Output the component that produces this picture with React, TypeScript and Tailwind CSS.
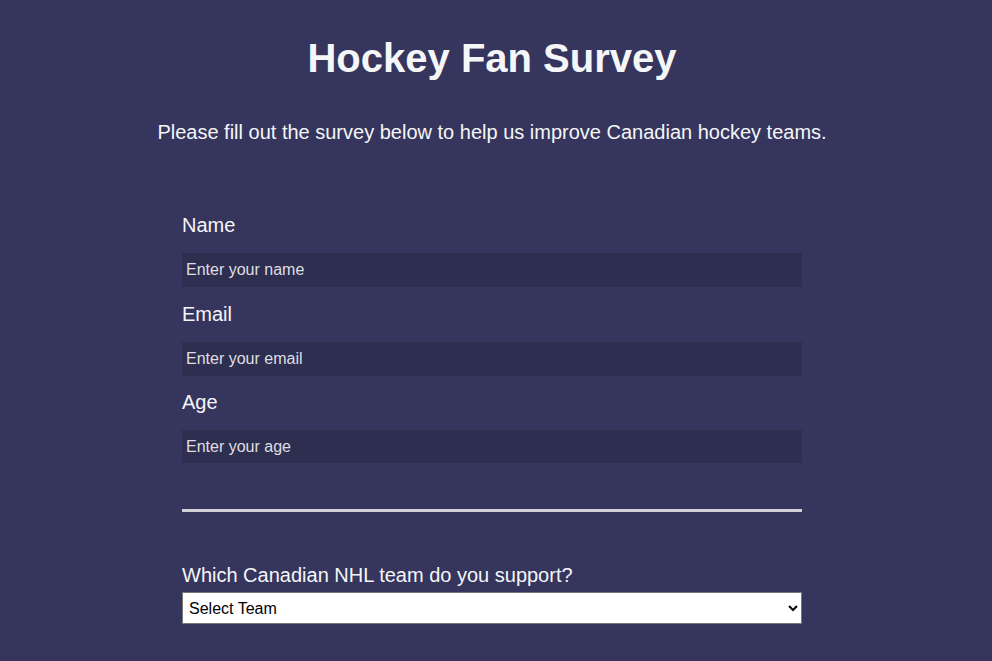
export default function App() {
  return (
    <div
      className="min-h-screen bg-[#35355d] pr-[8px] text-[#f5f6f7]"
      style={{ fontFamily: '"Liberation Sans", Arial, sans-serif' }}
    >
      <h1 className="pt-[35px] text-center text-[40px] font-bold leading-[46px]">Hockey Fan Survey</h1>
      <p className="mt-[40px] text-center text-[20px] leading-[23px]">
        Please fill out the survey below to help us improve Canadian hockey teams.
      </p>
      <form className="mx-auto mt-[70px] w-[620px]">
        <label className="block text-[20px] leading-[23px]">Name</label>
        <input
          type="text"
          placeholder="Enter your name"
          className="mt-[16px] block h-[34px] w-full bg-[#2e2e50] px-[4px] text-[16px] placeholder:text-[#dfdfe2] outline-none"
        />
        <label className="mt-[16px] block text-[20px] leading-[23px]">Email</label>
        <input
          type="email"
          placeholder="Enter your email"
          className="mt-[16px] block h-[34px] w-full bg-[#2e2e50] px-[4px] text-[16px] placeholder:text-[#dfdfe2] outline-none"
        />
        <label className="mt-[15px] block text-[20px] leading-[23px]">Age</label>
        <input
          type="number"
          placeholder="Enter your age"
          className="mt-[16px] block h-[33px] w-full bg-[#2e2e50] px-[4px] text-[16px] placeholder:text-[#dfdfe2] outline-none"
        />
        <hr className="mt-[46px] border-0 border-t-[3px] border-[#d0d0d5]" />
        <label className="mt-[52px] block text-[20px] leading-[23px]">Which Canadian NHL team do you support?</label>
        <select className="mt-[5px] block h-[32px] w-full border border-[#767676] bg-white px-[2px] text-[16px] text-black">
          <option>Select Team</option>
          <option>Toronto Maple Leafs</option>
          <option>Montreal Canadiens</option>
          <option>Vancouver Canucks</option>
          <option>Calgary Flames</option>
          <option>Edmonton Oilers</option>
          <option>Ottawa Senators</option>
          <option>Winnipeg Jets</option>
        </select>
      </form>
    </div>
  );
}
